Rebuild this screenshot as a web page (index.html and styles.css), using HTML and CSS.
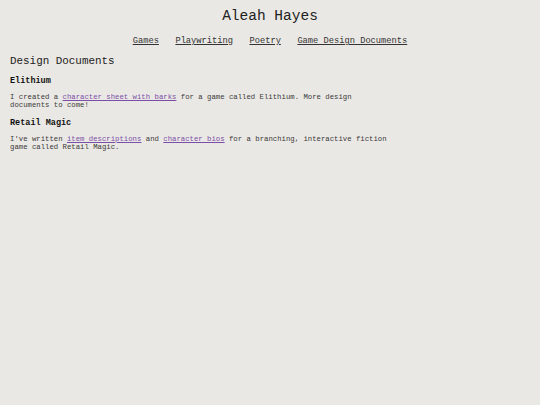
FILE: index.html
```html
<!DOCTYPE html>
<html lang="en">
<head>
<meta charset="utf-8">
<title>Aleah Hayes</title>
<link rel="stylesheet" href="styles.css">
</head>
<body>
<header class="site-header">
  <h1 class="site-title">Aleah Hayes</h1>
  <nav class="site-nav">
    <a href="#">Games</a>
    <a href="#">Playwriting</a>
    <a href="#">Poetry</a>
    <a href="#">Game Design Documents</a>
  </nav>
</header>
<main class="content">
  <h2 class="page-title">Design Documents</h2>
  <section class="doc">
    <h3 class="doc-title">Elithium</h3>
    <p class="doc-text">I created a <a class="link" href="#">character sheet with barks</a> for a game called Elithium. More design documents to come!</p>
  </section>
  <section class="doc">
    <h3 class="doc-title">Retail Magic</h3>
    <p class="doc-text">I've written <a class="link" href="#">item descriptions</a> and <a class="link" href="#">character bios</a> for a branching, interactive fiction game called Retail Magic.</p>
  </section>
</main>
</body>
</html>
```
FILE: styles.css
```css
html, body {
  margin: 0;
  padding: 0;
}
body {
  background: #eae8e4;
  color: #3a3a3a;
  font-family: "Liberation Mono", "DejaVu Sans Mono", monospace;
  padding: 0 10px;
}
.site-header {
  display: flex;
  flex-direction: column;
  align-items: center;
  padding-top: 6px;
}
.site-title {
  margin: 0;
  font-weight: normal;
  font-size: 14.5px;
  line-height: 20px;
  color: #222;
}
.site-nav {
  display: flex;
  gap: 16.5px;
  margin-top: 9px;
  font-size: 8.73px;
  line-height: 12px;
}
.site-nav a {
  color: #333;
}
.content {
  padding-top: 7px;
}
.page-title {
  margin: 0;
  font-weight: normal;
  font-size: 10.9px;
  line-height: 14px;
  color: #222;
}
.doc-title {
  margin: 7px 0 0;
  font-size: 8.5px;
  line-height: 12px;
  color: #111;
}
.doc-text {
  margin: 6px 0 0;
  font-size: 7.3px;
  line-height: 8px;
  max-width: 381px;
}
.doc + .doc .doc-title {
  margin-top: 8px;
}
.link {
  color: #7b4fa8;
}
```
